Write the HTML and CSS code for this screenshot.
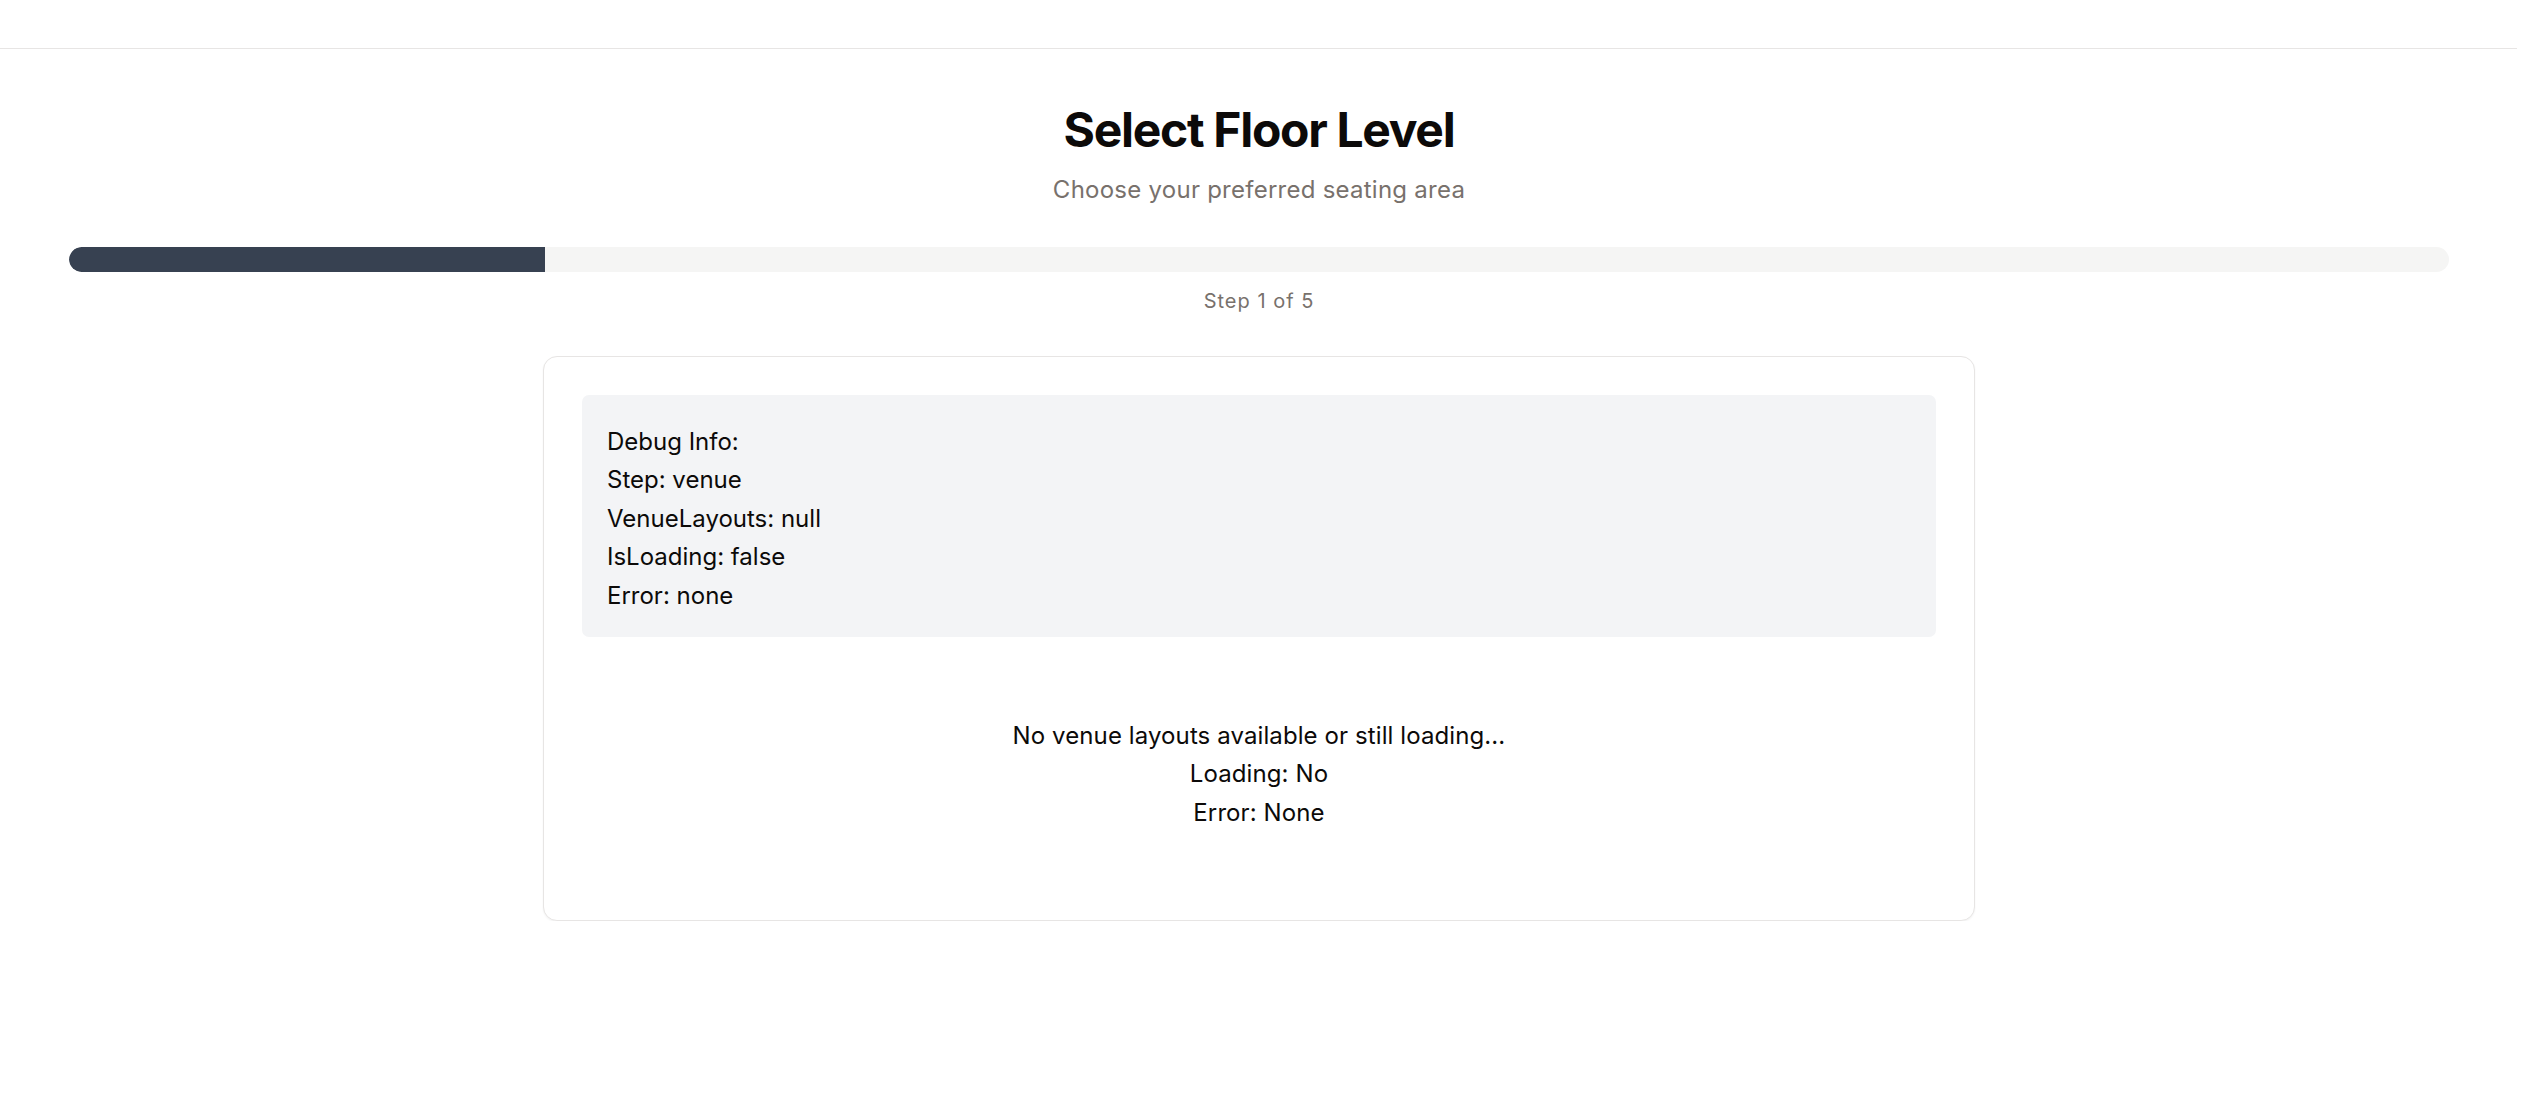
FILE: index.html
```html
<!DOCTYPE html>
<html lang="en">
<head>
<meta charset="utf-8">
<title>Select Floor Level</title>
<link rel="stylesheet" href="styles.css">
</head>
<body>
<header class="topbar"></header>
<main class="page">
  <h1 class="title">Select Floor Level</h1>
  <p class="subtitle">Choose your preferred seating area</p>
  <div class="progress">
    <div class="progress-fill" style="width: 20%"></div>
  </div>
  <p class="step">Step 1 of 5</p>
  <section class="card">
    <div class="debug">
      <div>Debug Info:</div>
      <div>Step: venue</div>
      <div>VenueLayouts: null</div>
      <div>IsLoading: false</div>
      <div>Error: none</div>
    </div>
    <div class="empty">
      <div>No venue layouts available or still loading...</div>
      <div>Loading: No</div>
      <div>Error: None</div>
    </div>
  </section>
</main>
</body>
</html>
```

FILE: styles.css
```css
* { box-sizing: border-box; }
html, body {
  margin: 0;
  padding: 0;
  background: #ffffff;
}
body {
  font-family: Inter, "Noto Sans", "Liberation Sans", sans-serif;
  color: #0c0a09;
  width: 2517px;
}
.topbar {
  height: 49px;
  border-bottom: 1px solid #e7e5e4;
  width: 2534px;
}
.page {
  padding: 52px 68px 0 69px;
  display: flex;
  flex-direction: column;
  align-items: center;
}
.title {
  margin: 0;
  font-size: 48px;
  line-height: 58px;
  font-weight: 700;
  letter-spacing: -1.3px;
  color: #0c0a09;
}
.subtitle {
  margin: 13px 0 0 0;
  font-size: 24px;
  line-height: 36px;
  letter-spacing: 0.25px;
  color: #78716c;
}
.progress {
  margin-top: 39px;
  width: 100%;
  height: 25px;
  border-radius: 13px;
  background: #f5f5f4;
  overflow: hidden;
}
.progress-fill {
  height: 100%;
  background: #374151;
  border-radius: 13px 0 0 13px;
}
.step {
  margin: 15px 0 0 0;
  font-size: 20px;
  line-height: 29px;
  letter-spacing: 1px;
  color: #78716c;
}
.card {
  margin-top: 40px;
  width: 1432px;
  border: 1px solid #e7e5e4;
  border-radius: 14px;
  padding: 38px 38px 40px 38px;
  background: #ffffff;
  box-shadow: 0 1px 2px rgba(0, 0, 0, 0.05);
}
.debug {
  background: #f3f4f6;
  border-radius: 7px;
  padding: 28px 25px 22px 25px;
  font-size: 24px;
  line-height: 38.4px;
  color: #0c0a09;
}
.empty {
  margin-top: 32px;
  padding: 48px 0 48px 0;
  text-align: center;
  font-size: 24px;
  line-height: 38.4px;
  letter-spacing: 0.1px;
  color: #0c0a09;
}
```
